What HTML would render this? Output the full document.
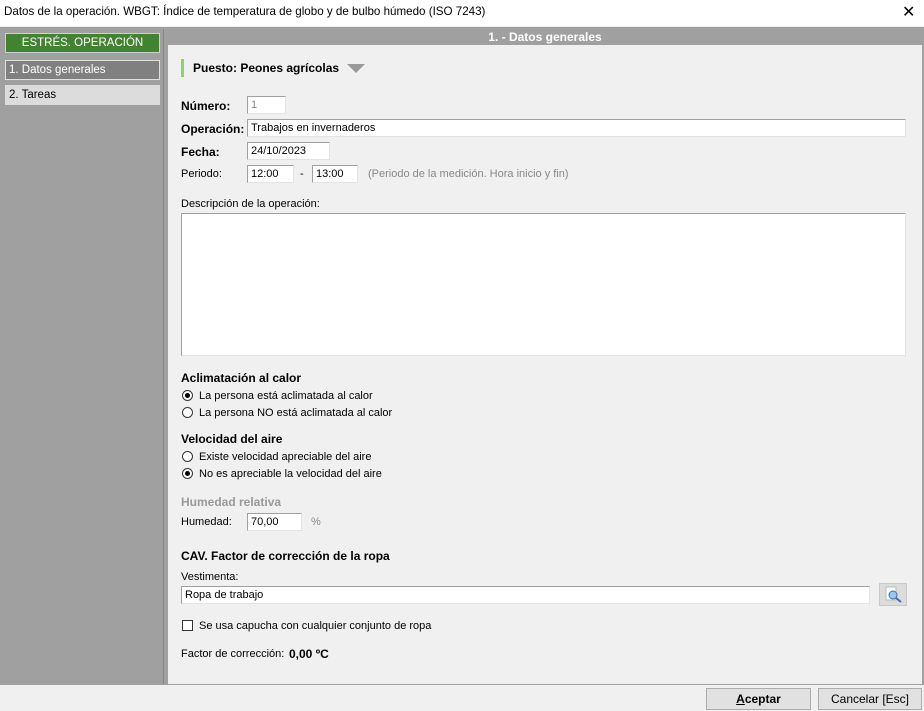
<!DOCTYPE html>
<html><head><meta charset="utf-8"><style>
*{margin:0;padding:0;box-sizing:border-box}
body{width:924px;height:711px;position:relative;overflow:hidden;background:#f0f0f0;font-family:"Liberation Sans",sans-serif;font-size:11px;color:#000}
.a{position:absolute;white-space:nowrap}
.in{position:absolute;background:#fff;border:1px solid #a0a0a0;border-right-color:#e3e3e3;border-bottom-color:#e3e3e3;height:18px;padding:1px 3px;font-size:11px;line-height:14px}
.b{font-weight:bold}
.rad{position:absolute;width:11px;height:11px;border:1px solid #333;border-radius:50%;background:#fff}
.rad.on::after{content:"";position:absolute;left:2px;top:2px;width:5px;height:5px;border-radius:50%;background:#000}
.btn{position:absolute;height:22px;border:1px solid #adadad;background:#e1e1e1;text-align:center;line-height:20px;font-size:12px}
</style></head><body>
<div class="a" style="left:0;top:0;width:924px;height:26px;background:#fff"></div>
<div class="a" style="left:4px;top:5px;font-size:11.6px">Datos de la operación. WBGT: Índice de temperatura de globo y de bulbo húmedo (ISO 7243)</div>
<div class="a" style="left:902px;top:2px;font-size:16px">✕</div>
<div class="a" style="left:0;top:27px;width:924px;height:658px;background:#a0a0a0"></div>
<div class="a" style="left:2px;top:29px;width:162px;height:655px;background:#a0a0a0;border-right:1px solid #888"></div>
<div class="a" style="left:5px;top:33px;width:155px;height:20px;background:#42832f;border:1px solid #d0d0d0;color:#fff;text-align:center;line-height:18px;font-size:11.5px">ESTRÉS. OPERACIÓN</div>
<div class="a" style="left:5px;top:60px;width:155px;height:20px;background:#808080;border:1px solid #e0e0e0;color:#fff;line-height:18px;padding-left:3px;font-size:11.5px">1. Datos generales</div>
<div class="a" style="left:5px;top:85px;width:155px;height:20px;background:#dcdcdc;line-height:20px;padding-left:4px;font-size:11.5px">2. Tareas</div>
<div class="a" style="left:168px;top:29px;width:754px;height:655px;background:#f0f0f0"></div>
<div class="a b" style="left:168px;top:29px;width:754px;height:16px;background:#a0a0a0;color:#fff;text-align:center;line-height:16px;font-size:12px">1. - Datos generales</div>
<div class="a" style="left:181px;top:59px;width:3px;height:18px;background:#8fd46a"></div>
<div class="a b" style="left:193px;top:61px;font-size:12px">Puesto: Peones agrícolas</div>
<svg class="a" style="left:347px;top:64px" width="18" height="10"><path d="M0 0H18L9 9Z" fill="#999"/></svg>
<div class="a b" style="left:181px;top:99px;font-size:12px">Número:</div><div class="in" style="left:247px;top:96px;width:39px;color:#888">1</div>
<div class="a b" style="left:181px;top:122px;font-size:12px">Operación:</div><div class="in" style="left:247px;top:119px;width:659px">Trabajos en invernaderos</div>
<div class="a b" style="left:181px;top:145px;font-size:12px">Fecha:</div><div class="in" style="left:247px;top:142px;width:83px">24/10/2023</div>
<div class="a" style="left:181px;top:168px">Periodo:</div><div class="in" style="left:247px;top:165px;width:47px">12:00</div>
<div class="a" style="left:300px;top:168px">-</div><div class="in" style="left:312px;top:165px;width:46px">13:00</div>
<div class="a" style="left:368px;top:168px;color:#888">(Periodo de la medición. Hora inicio y fin)</div>
<div class="a" style="left:181px;top:198px">Descripción de la operación:</div>
<div class="in" style="left:181px;top:213px;width:725px;height:143px"></div>
<div class="a b" style="left:181px;top:371px;font-size:12px">Aclimatación al calor</div>
<div class="rad on" style="left:182px;top:390px"></div><div class="a" style="left:199px;top:390px">La persona está aclimatada al calor</div>
<div class="rad" style="left:182px;top:407px"></div><div class="a" style="left:199px;top:407px">La persona NO está aclimatada al calor</div>
<div class="a b" style="left:181px;top:432px;font-size:12px">Velocidad del aire</div>
<div class="rad" style="left:182px;top:451px"></div><div class="a" style="left:199px;top:451px">Existe velocidad apreciable del aire</div>
<div class="rad on" style="left:182px;top:468px"></div><div class="a" style="left:199px;top:468px">No es apreciable la velocidad del aire</div>
<div class="a b" style="left:181px;top:495px;font-size:12px;color:#999">Humedad relativa</div>
<div class="a" style="left:181px;top:516px">Humedad:</div><div class="in" style="left:247px;top:513px;width:55px">70,00</div>
<div class="a" style="left:311px;top:516px;color:#888">%</div>
<div class="a b" style="left:181px;top:549px;font-size:12px">CAV. Factor de corrección de la ropa</div>
<div class="a" style="left:181px;top:571px">Vestimenta:</div>
<div class="in" style="left:181px;top:586px;width:689px">Ropa de trabajo</div>
<div class="a" style="left:879px;top:583px;width:28px;height:23px;background:#dcdcdc;border:1px solid #c8c8c8"></div>
<svg class="a" style="left:884px;top:586px" width="20" height="18"><rect x="2" y="1" width="10" height="13" fill="#fff" stroke="#bbb"/><circle cx="9" cy="9" r="4" fill="#9cc8ee" stroke="#3a70b0"/><path d="M12 12L17 16" stroke="#3a70b0" stroke-width="2"/></svg>
<div class="a" style="left:182px;top:620px;width:11px;height:11px;border:1px solid #333;background:#fff"></div>
<div class="a" style="left:199px;top:620px">Se usa capucha con cualquier conjunto de ropa</div>
<div class="a" style="left:181px;top:648px">Factor de corrección:</div>
<div class="a b" style="left:289px;top:647px;font-size:12px">0,00 ºC</div>
<div class="a" style="left:0;top:685px;width:924px;height:26px;background:#f0f0f0"></div>
<div class="btn b" style="left:706px;top:688px;width:105px"><u>A</u>ceptar</div>
<div class="btn" style="left:818px;top:688px;width:104px">Cancelar [Esc]</div>
</body></html>
